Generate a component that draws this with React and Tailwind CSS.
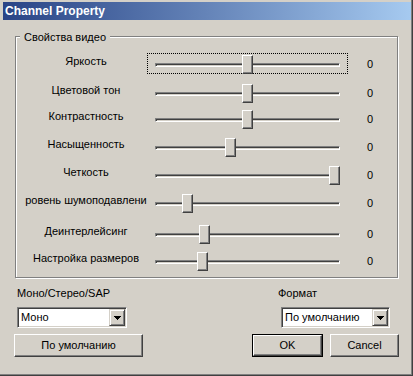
import React from 'react';

const rows = [
  { label: 'Яркость', pos: 87, gap: 'mt-[16px]', focus: true },
  { label: 'Цветовой тон', pos: 87, gap: 'mt-[8px]' },
  { label: 'Контрастность', pos: 87, gap: 'mt-[5px]' },
  { label: 'Насыщенность', pos: 70, gap: 'mt-[7px]' },
  { label: 'Четкость', pos: 174, gap: 'mt-[7px]' },
  { label: 'ровень шумоподавлени', pos: 27, gap: 'mt-[7px]' },
  { label: 'Деинтерлейсинг', pos: 44, gap: 'mt-[10px]' },
  { label: 'Настройка размеров', pos: 42, gap: 'mt-[6px]' },
];

const raised =
  'bg-[#d4d0c8] border border-t-white border-l-white border-r-[#404040] border-b-[#404040] shadow-[inset_-1px_-1px_0_#808080]';

const SliderRow = ({ label, pos, gap, focus }) => (
  <div className={`flex items-center h-[21px] ${gap}`}>
    <div className="w-[131px] pl-[9px] text-center whitespace-nowrap mb-[5px]">{label}</div>
    <div
      className={`relative w-[201px] h-[21px] px-[7px] flex items-center border ${
        focus ? 'border-dotted border-black' : 'border-transparent'
      }`}
    >
      <div className="mt-[2px] w-full h-[4px] border border-t-[#808080] border-l-[#808080] border-b-white border-r-white shadow-[inset_1px_1px_0_#404040]" />
      <div
        className="absolute top-[1px] w-[11px] h-[19px] bg-[#d4d0c8] border border-t-white border-l-white border-r-[#404040] border-b-[#404040] shadow-[inset_-1px_-1px_0_#808080]"
        style={{ left: 7 + pos }}
      />
    </div>
    <div className="w-[44px] text-center mt-[1px]">0</div>
  </div>
);

const Combo = ({ value, width }) => (
  <div
    className={`${width} h-[21px] flex p-[1px] bg-white border border-t-[#808080] border-l-[#808080] border-b-white border-r-white shadow-[inset_1px_1px_0_#404040,inset_-1px_-1px_0_#d4d0c8]`}
  >
    <div className="flex-1 flex items-center pl-[2px] whitespace-nowrap">{value}</div>
    <div className="w-[16px] h-full flex items-center justify-center bg-[#d4d0c8] border border-t-[#d4d0c8] border-l-[#d4d0c8] border-r-[#404040] border-b-[#404040] shadow-[inset_1px_1px_0_#fff,inset_-1px_-1px_0_#808080]">
      <svg width="7" height="4" viewBox="0 0 7 4" shapeRendering="crispEdges">
        <rect x="0" y="0" width="7" height="1" fill="#000" />
        <rect x="1" y="1" width="5" height="1" fill="#000" />
        <rect x="2" y="2" width="3" height="1" fill="#000" />
        <rect x="3" y="3" width="1" height="1" fill="#000" />
      </svg>
    </div>
  </div>
);

export default function App() {
  return (
    <div className="w-[413px] h-[376px] border-r border-b border-[#404040] bg-[#d4d0c8] font-['Liberation_Sans',Arial,sans-serif] text-[11px] leading-[13px] text-black">
      <div className="h-full flex flex-col border-r border-b border-[#808080]">
        {/* title bar */}
        <div className="ml-[3px] mt-[2px] h-[18px] flex items-center pl-[2px] bg-linear-to-r from-[#2a4486] via-[#6584b8] to-[#a6caf0] text-white font-bold text-[12px]">
          Channel Property
        </div>

        {/* video properties group */}
        <div className="relative ml-[15px] mt-[16px] w-[383px] h-[242px] border border-[#808080] shadow-[inset_1px_1px_0_#fff,1px_1px_0_#fff]">
          <div className="absolute -top-[6px] left-[4px] px-[4px] bg-[#d4d0c8]">Свойства видео</div>
          <div className="flex flex-col">
            {rows.map((r) => (
              <SliderRow key={r.label} {...r} />
            ))}
          </div>
        </div>

        {/* audio / format */}
        <div className="flex mt-[9px]">
          <div className="ml-[17px] w-[110px]">
            <div>Моно/Стерео/SAP</div>
            <div className="mt-[7px]">
              <Combo value="Моно" width="w-[110px]" />
            </div>
          </div>
          <div className="ml-[151px] w-[112px]">
            <div>Формат</div>
            <div className="mt-[7px] ml-[3px]">
              <Combo value="По умолчанию" width="w-[109px]" />
            </div>
          </div>
        </div>

        {/* buttons */}
        <div className="flex mt-[6px]">
          <div className={`ml-[14px] w-[129px] h-[23px] flex items-center justify-center ${raised}`}>
            По умолчанию
          </div>
          <div className="ml-[109px] w-[71px] h-[23px] border border-black">
            <div className={`w-full h-full flex items-center justify-center ${raised}`}>OK</div>
          </div>
          <div className={`ml-[7px] w-[69px] h-[23px] flex items-center justify-center ${raised}`}>
            Cancel
          </div>
        </div>
      </div>
    </div>
  );
}
